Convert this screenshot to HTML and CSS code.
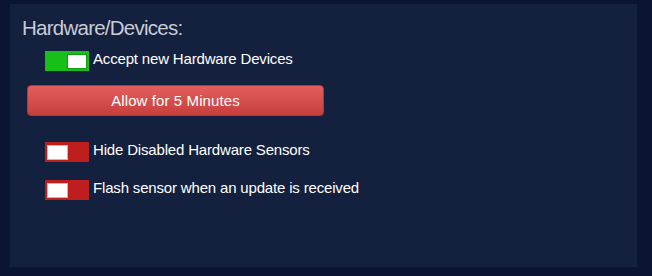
FILE: index.html
```
<!DOCTYPE html>
<html>
<head>
<meta charset="utf-8">
<link rel="stylesheet" href="styles.css">
</head>
<body>
<div class="panel">
  <h2 class="title">Hardware/Devices:</h2>
  <div class="row row-first">
    <span class="toggle on"><span class="knob"></span></span>
    <span class="label">Accept new Hardware Devices</span>
  </div>
  <button class="btn">Allow for 5 Minutes</button>
  <div class="row row-second">
    <span class="toggle off"><span class="knob"></span></span>
    <span class="label">Hide Disabled Hardware Sensors</span>
  </div>
  <div class="row row-third">
    <span class="toggle off"><span class="knob"></span></span>
    <span class="label">Flash sensor when an update is received</span>
  </div>
</div>
</body>
</html>
```
FILE: styles.css
```
html, body {
  margin: 0;
  padding: 0;
}
body {
  width: 652px;
  height: 276px;
  background: #0b1433;
  font-family: "Liberation Sans", Arial, sans-serif;
  overflow: hidden;
}
.panel {
  margin: 4px 0 0 10px;
  width: 627px;
  height: 263px;
  box-sizing: border-box;
  background: #13203e;
  padding: 12px 12px 0 12px;
  display: flex;
  flex-direction: column;
  align-items: flex-start;
}
.title {
  margin: 0;
  font-size: 20.5px;
  line-height: 23px;
  letter-spacing: -0.75px;
  font-weight: normal;
  color: #c9ccd3;
}
.row {
  display: flex;
  align-items: flex-start;
  gap: 4px;
  margin-left: 23px;
}
.row-first { margin-top: 12px; }
.row-second { margin-top: 26px; }
.row-third { margin-top: 18px; }
.label {
  color: #ffffff;
  font-size: 15px;
  line-height: 17px;
  letter-spacing: -0.17px;
  margin-top: -1px;
}
.toggle {
  width: 44px;
  height: 20px;
  box-sizing: border-box;
  display: flex;
}
.toggle.on {
  background: #19bf19;
  justify-content: flex-end;
  padding: 4px 3px 3px 0;
}
.toggle.on .knob {
  width: 18px;
  height: 13px;
  background: #ffffff;
  box-shadow: 0 0 1px 1px #149a14;
}
.toggle.off {
  background: #bf1e1e;
  justify-content: flex-start;
  padding: 3px 0 2px 2px;
}
.toggle.off .knob {
  width: 21px;
  height: 15px;
  box-sizing: border-box;
  background: #ffffff;
  border: 1px solid #c4b8b8;
}
.btn {
  margin: 14px 0 0 5px;
  width: 297px;
  height: 31px;
  border: 1px solid #b43838;
  border-radius: 4px;
  background: linear-gradient(#e25e5c, #c73f3d);
  color: #ffffff;
  font-family: "Liberation Sans", Arial, sans-serif;
  font-size: 15px;
  letter-spacing: 0.1px;
  padding: 0;
}
```
